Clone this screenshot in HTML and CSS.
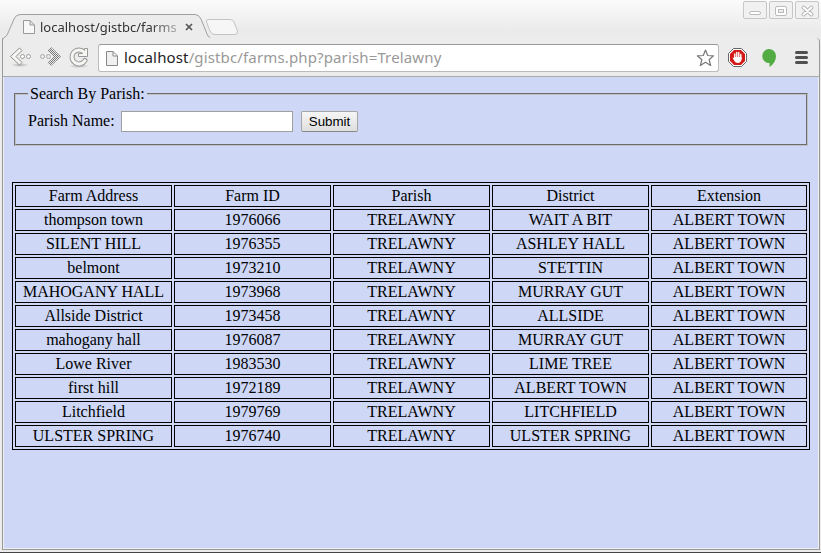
FILE: index.html
```html
<!DOCTYPE html>
<html lang="en">
<head>
<meta charset="utf-8">
<title>Farms</title>
<link rel="stylesheet" href="styles.css">
</head>
<body>
<div class="window">
  <header class="titlebar">
    <svg class="tab-shape" width="244" height="40" viewBox="0 0 244 40">
      <path d="M2.5 40V39Q6 38 8 33L14 19Q16 14.500 20 14.500H195Q199 14.500 201 19L207 34Q209 38.500 213 38.500V40Z" fill="#ececec"/>
      <path d="M2.500 40Q3 38 5 37Q7 36 8 33L14 19Q16 14.500 20 14.500H195Q199 14.500 201 19L207 34Q208 37 210 37.500" fill="none" stroke="#a0a0a0"/>
      <path d="M208 19.500H230Q233 19.500 234 22L237.500 31Q238 34.500 235 34.500H215Q211.500 34.500 210 31L206.500 22Q206 19.500 208 19.500Z" fill="#f6f6f6" stroke="#c4c4c4"/>
    </svg>
    <div class="tab">
      <svg width="12" height="14" viewBox="0 0 12 14"><path d="M.5.500H7L11.500 5V13.500H.5ZM7 .5V5H11.500" fill="#f8f8f8" stroke="#999"/></svg>
      <span class="tab-title">localhost/gistbc/farms</span>
      <svg width="8" height="8" viewBox="0 0 8 8"><path d="M1 1L7 7M7 1L1 7" stroke="#555" stroke-width="1.700"/></svg>
    </div>
    <div class="controls">
      <span class="control"><svg width="22" height="16"><rect x="5.500" y="9.500" width="11" height="3" rx="1.500" fill="#fff" stroke="#bbb"/></svg></span>
      <span class="control"><svg width="22" height="16"><rect x="5.500" y="4.500" width="11" height="9" rx="1.500" fill="#fff" stroke="#bbb"/><rect x="8.500" y="7.500" width="5" height="3" fill="#eee" stroke="#bbb"/></svg></span>
      <span class="control"><svg width="22" height="16"><path d="M7.500 5.500L15.500 12.500M15.500 5.500L7.500 12.500" stroke="#b5b5b5" stroke-width="4" stroke-linecap="round"/><path d="M7.500 5.500L15.500 12.500M15.500 5.500L7.500 12.500" stroke="#fff" stroke-width="2" stroke-linecap="round"/></svg></span>
    </div>
  </header>
  <nav class="toolbar">
    <svg class="nav-icons" width="90" height="30" viewBox="0 43 90 30">
      <defs><pattern id="dots" width="2" height="2" patternUnits="userSpaceOnUse"><path d="M0 0H1V1H0ZM1 1H2V2H1Z" fill="#777"/></pattern>
      <radialGradient id="shade"><stop offset="0" stop-color="#888" stop-opacity=".6"/><stop offset="1" stop-color="#888" stop-opacity="0"/></radialGradient></defs>
      <ellipse cx="20" cy="65" rx="9" ry="2" fill="url(#shade)"/>
      <ellipse cx="79" cy="66" rx="10" ry="2" fill="url(#shade)"/>
      <path d="M19.500 48L10.500 56.500L19.500 65L22 62.500L16 56.500L22 50.500Z" fill="#f6f6f2" stroke="#8e8e8e" stroke-linejoin="round"/>
      <g fill="#fff" stroke="#999"><circle cx="22.500" cy="56.500" r="2"/><circle cx="28.500" cy="56.500" r="2"/></g>
      <path d="M51 47L61 56.500L51 66L47.500 63L54 56.500L47.500 50.500Z" fill="url(#dots)"/>
      <g fill="none" stroke="#aaa"><circle cx="42.500" cy="56.500" r="2"/><circle cx="48.500" cy="56.500" r="2"/></g>
      <path d="M84 52A7 7 0 1 0 85 60.500" fill="none" stroke="#999" stroke-width="5" stroke-linecap="round"/>
      <path d="M87.500 48.500V56.500H78.500V53.500H82.500L84.500 51V48.500Z" fill="#f6f6f2" stroke="#999" stroke-linejoin="round"/>
      <path d="M84 52A7 7 0 1 0 85 60.500" fill="none" stroke="#f6f6f2" stroke-width="3" stroke-linecap="round"/>
    </svg>
    <div class="omnibox">
      <svg width="12" height="15" viewBox="0 0 12 15"><path d="M.5.500H7L11.500 5V14.500H.5ZM7 .5V5H11.500" fill="#f0f0f0" stroke="#888"/></svg>
      <span class="url"><span class="host">localhost</span>/gistbc/farms.php?parish=Trelawny</span>
      <svg width="18" height="18" viewBox="0 0 18 18"><path d="M9.500 1L11.700 6.500L17.500 6.800L13.100 10.700L14.700 16.500L9.500 13.200L4.300 16.500L5.900 10.700L1.300 6.800L7.300 6.500Z" fill="#fff" stroke="#777" stroke-width="1.200" stroke-linejoin="round"/></svg>
    </div>
    <svg class="extensions" width="84" height="22" viewBox="727 47 84 22">
      <path d="M733.500 48.500H741.500L746.500 53.500V61.500L741.500 66.500H733.500L728.500 61.500V53.500Z" fill="#fff" stroke="#666"/>
      <path d="M734 50H741L745 54V61L741 65H734L730 61V54Z" fill="#d51818"/>
      <path d="M734.800 54V59M736.800 52.500V59M738.800 52.500V59M740.800 54.500V59" stroke="#fff" stroke-width="1.400" stroke-linecap="round"/>
      <path d="M732.500 57.500L734.500 58V57H741.500V60Q740.500 63 738 63Q735.500 63 734 60.500Z" fill="#fff"/>
      <path d="M769 49A7 7 0 0 1 776 56Q776 62.500 769.500 67V63A7 7 0 0 1 769 49Z" fill="#53ab43"/>
      <path d="M796.500 52.500H806.500M796.500 57.500H806.500M796.500 62.500H806.500" stroke="#505050" stroke-width="3" stroke-linecap="round"/>
    </svg>
  </nav>
  <main class="page">
    <form class="search-form">
      <fieldset class="search">
        <legend>Search By Parish:</legend>
        <div class="field"><label for="parish">Parish Name:</label><input id="parish" type="text"><button type="button">Submit</button></div>
      </fieldset>
    </form>
    <table class="farms">
      <colgroup><col span="4" class="wide"><col class="last"></colgroup>
      <tr><td>Farm Address</td><td>Farm ID</td><td>Parish</td><td>District</td><td>Extension</td></tr>
      <tr><td>thompson town</td><td>1976066</td><td>TRELAWNY</td><td>WAIT A BIT</td><td>ALBERT TOWN</td></tr>
      <tr><td>SILENT HILL</td><td>1976355</td><td>TRELAWNY</td><td>ASHLEY HALL</td><td>ALBERT TOWN</td></tr>
      <tr><td>belmont</td><td>1973210</td><td>TRELAWNY</td><td>STETTIN</td><td>ALBERT TOWN</td></tr>
      <tr><td>MAHOGANY HALL</td><td>1973968</td><td>TRELAWNY</td><td>MURRAY GUT</td><td>ALBERT TOWN</td></tr>
      <tr><td>Allside District</td><td>1973458</td><td>TRELAWNY</td><td>ALLSIDE</td><td>ALBERT TOWN</td></tr>
      <tr><td>mahogany hall</td><td>1976087</td><td>TRELAWNY</td><td>MURRAY GUT</td><td>ALBERT TOWN</td></tr>
      <tr><td>Lowe River</td><td>1983530</td><td>TRELAWNY</td><td>LIME TREE</td><td>ALBERT TOWN</td></tr>
      <tr><td>first hill</td><td>1972189</td><td>TRELAWNY</td><td>ALBERT TOWN</td><td>ALBERT TOWN</td></tr>
      <tr><td>Litchfield</td><td>1979769</td><td>TRELAWNY</td><td>LITCHFIELD</td><td>ALBERT TOWN</td></tr>
      <tr><td>ULSTER SPRING</td><td>1976740</td><td>TRELAWNY</td><td>ULSTER SPRING</td><td>ALBERT TOWN</td></tr>
    </table>
  </main>
</div>
</body>
</html>
```
FILE: styles.css
```css
* { box-sizing: border-box; }
body { margin: 0; overflow: hidden; }
svg { display: block; flex: none; }

.window {
  display: flex;
  flex-direction: column;
  height: 553px;
  padding-bottom: 2px;
  background: #ececec;
  border-bottom: 1px solid #444;
}

.titlebar {
  position: relative;
  display: flex;
  justify-content: space-between;
  height: 38px;
  flex: none;
  background: linear-gradient(#fbfbfb, #ebebeb 30px);
}
.tab-shape { position: absolute; left: 0; top: 0; z-index: 1; }
.tab {
  position: relative;
  z-index: 2;
  display: flex;
  align-items: center;
  height: 24px;
  margin: 15px 0 0 23px;
}
.tab-title {
  width: 138px;
  margin: 0 7px 0 5px;
  overflow: hidden;
  white-space: nowrap;
  font: 13px/20px "Noto Sans", "Open Sans", sans-serif;
  color: #333;
  -webkit-mask-image: linear-gradient(90deg, #000 110px, rgba(0,0,0,.3) 138px);
  mask-image: linear-gradient(90deg, #000 110px, rgba(0,0,0,.3) 138px);
}
.controls { display: flex; gap: 2px; padding: 1px 2px 0 0; }
.control {
  width: 24px;
  height: 18px;
  border: 1px solid #c6c6c6;
  border-radius: 2px;
  background: #f1f1f1;
}

.toolbar {
  display: flex;
  align-items: flex-start;
  height: 39px;
  flex: none;
  margin: 0 1px 0 2px;
  padding-top: 5px;
  border-left: 1px solid #999;
  border-right: 1px solid #999;
  border-bottom: 1px solid #aaa;
  border-top-right-radius: 4px;
  background: #ececec;
}
.nav-icons { margin-left: -3px; }
.omnibox {
  display: flex;
  align-items: center;
  width: 621px;
  height: 28px;
  margin: 1px 0 0 8px;
  padding: 0 4px 0 7px;
  border: 1px solid #bbb;
  border-top-color: #999;
  border-radius: 3px;
  background: #fff;
}
.url {
  flex: 1;
  margin-left: 6px;
  font: 15px/20px "Noto Sans", "Open Sans", sans-serif;
  letter-spacing: .14px;
  position: relative;
  top: -1px;
  color: #999;
  white-space: nowrap;
}
.host { color: #222; }
.extensions { margin: 4px 0 0 8px; }

.page {
  flex: 1;
  margin: 0 1px 0 2px;
  padding: 8px;
  border-left: 1px solid #999;
  border-right: 1px solid #999;
  border-bottom: 1px solid #999;
  background: #ced7f6;
  box-shadow: inset 1px 0 #eee, inset -1px -1px #eee;
  font: 16px/18px "Liberation Serif", "Times New Roman", serif;
  color: #000;
}
.search-form { margin: 0 1px 36px; }
.search {
  width: 794px;
  height: 61px;
  margin: 0 2px;
  padding: 0 12px;
  border: 2px groove #c0c0c0;
}
.search legend { padding: 0 2px; }
.field { display: flex; align-items: center; height: 21px; margin-top: 8px; }
.field label { width: 93px; position: relative; top: -1px; }
.field input {
  width: 172px;
  height: 21px;
  border: 1px solid #a0a0a0;
  border-radius: 0;
  padding: 1px;
  background: #fff;
}
.field button {
  width: 57px;
  height: 21px;
  margin-left: 8px;
  padding: 0;
  border: 1px solid #a6a6a6;
  border-bottom-color: #888;
  border-radius: 2px;
  background: linear-gradient(#f6f6f6, #dedede);
  font: 13.333px "Liberation Sans", Arial, sans-serif;
  color: #000;
}

.farms {
  width: 798px;
  margin-left: 1px;
  table-layout: fixed;
  border: 1px solid #000;
  border-spacing: 2px;
  text-align: center;
}
.wide { width: 157px; }
.last { width: 156px; }
.farms td { height: 22px; padding: 1px; border: 1px solid #000; }
```
